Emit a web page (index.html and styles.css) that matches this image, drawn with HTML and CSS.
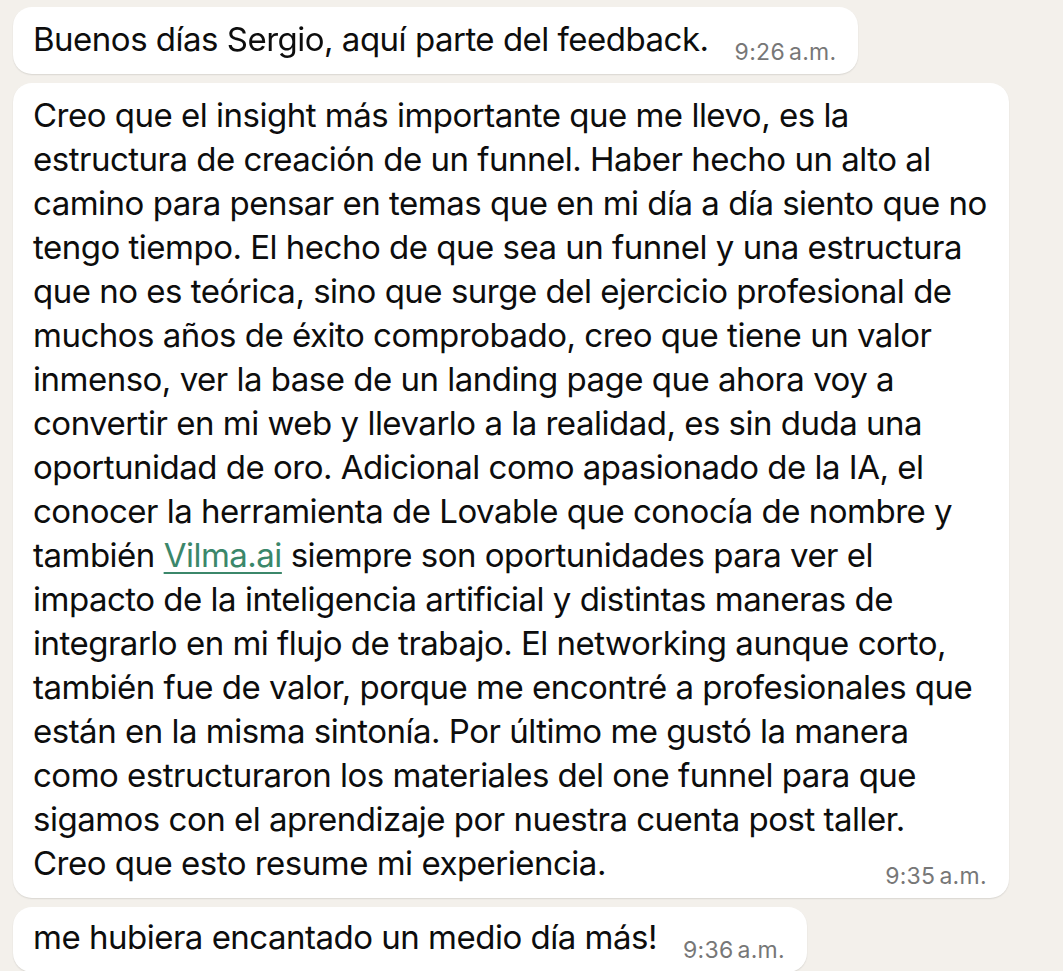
FILE: index.html
```html
<!DOCTYPE html>
<html lang="es">
<head>
<meta charset="utf-8">
<title>Chat</title>
<link rel="stylesheet" href="styles.css">
</head>
<body>
<main class="chat">
  <div class="bubble">
    <div class="last">
      <span class="txt">Buenos días <span class="redact">Sergio</span>, aquí parte del feedback.</span>
      <span class="time-wrap"><span class="time">9:26<span class="ampm">a.m.</span></span></span>
    </div>
  </div>

  <div class="bubble">
    <div class="line">Creo que el insight más importante que me llevo, es la</div>
    <div class="line">estructura de creación de un funnel. Haber hecho un alto al</div>
    <div class="line">camino para pensar en temas que en mi día a día siento que no</div>
    <div class="line">tengo tiempo. El hecho de que sea un funnel y una estructura</div>
    <div class="line">que no es teórica, sino que surge del ejercicio profesional de</div>
    <div class="line">muchos años de éxito comprobado, creo que tiene un valor</div>
    <div class="line">inmenso, ver la base de un landing page que ahora voy a</div>
    <div class="line">convertir en mi web y llevarlo a la realidad, es sin duda una</div>
    <div class="line">oportunidad de oro. Adicional como apasionado de la IA, el</div>
    <div class="line">conocer la herramienta de Lovable que conocía de nombre y</div>
    <div class="line">también <a class="link" href="#">Vilma.ai</a> siempre son oportunidades para ver el</div>
    <div class="line">impacto de la inteligencia artificial y distintas maneras de</div>
    <div class="line">integrarlo en mi flujo de trabajo. El networking aunque corto,</div>
    <div class="line">también fue de valor, porque me encontré a profesionales que</div>
    <div class="line">están en la misma sintonía. Por último me gustó la manera</div>
    <div class="line">como estructuraron los materiales del one funnel para que</div>
    <div class="line">sigamos con el aprendizaje por nuestra cuenta post taller.</div>
    <div class="last">
      <span class="txt">Creo que esto resume mi experiencia.</span>
      <span class="time-wrap"><span class="time">9:35<span class="ampm">a.m.</span></span></span>
    </div>
  </div>

  <div class="bubble">
    <div class="last">
      <span class="txt">me hubiera encantado un medio día más!</span>
      <span class="time-wrap"><span class="time">9:36<span class="ampm">a.m.</span></span></span>
    </div>
  </div>
</main>
</body>
</html>
```
FILE: styles.css
```css
html, body {
  margin: 0;
  padding: 0;
  background: #f3f0eb;
  height: 100%;
  overflow: hidden;
}

.chat {
  display: flex;
  flex-direction: column;
  align-items: flex-start;
  gap: 9px;
  padding: 7px 0 0 13px;
  font-family: Inter, "Noto Sans", sans-serif;
  font-size: 33px;
  letter-spacing: -0.5px;
  line-height: 44px;
  color: #0d0d0d;
}

.bubble {
  background: #ffffff;
  border-radius: 19px;
  padding: 10px 22px 13px 20px;
  box-shadow: 0 1px 1.5px rgba(0, 0, 0, 0.11);
  white-space: nowrap;
}

.bubble:nth-child(3) {
  padding-top: 8px;
}

.last {
  display: flex;
  align-items: baseline;
  justify-content: space-between;
  gap: 26px;
}

.time {
  font-size: 23px;
  letter-spacing: 0.3px;
  line-height: 0;
  color: #777777;
  vertical-align: -9px;
}

.ampm {
  margin-left: 4px;
}

.link {
  color: #3b876a;
  text-decoration: underline;
  text-decoration-thickness: 2px;
  text-underline-offset: 5px;
}

.redact {
  filter: blur(0.7px);
}
```
